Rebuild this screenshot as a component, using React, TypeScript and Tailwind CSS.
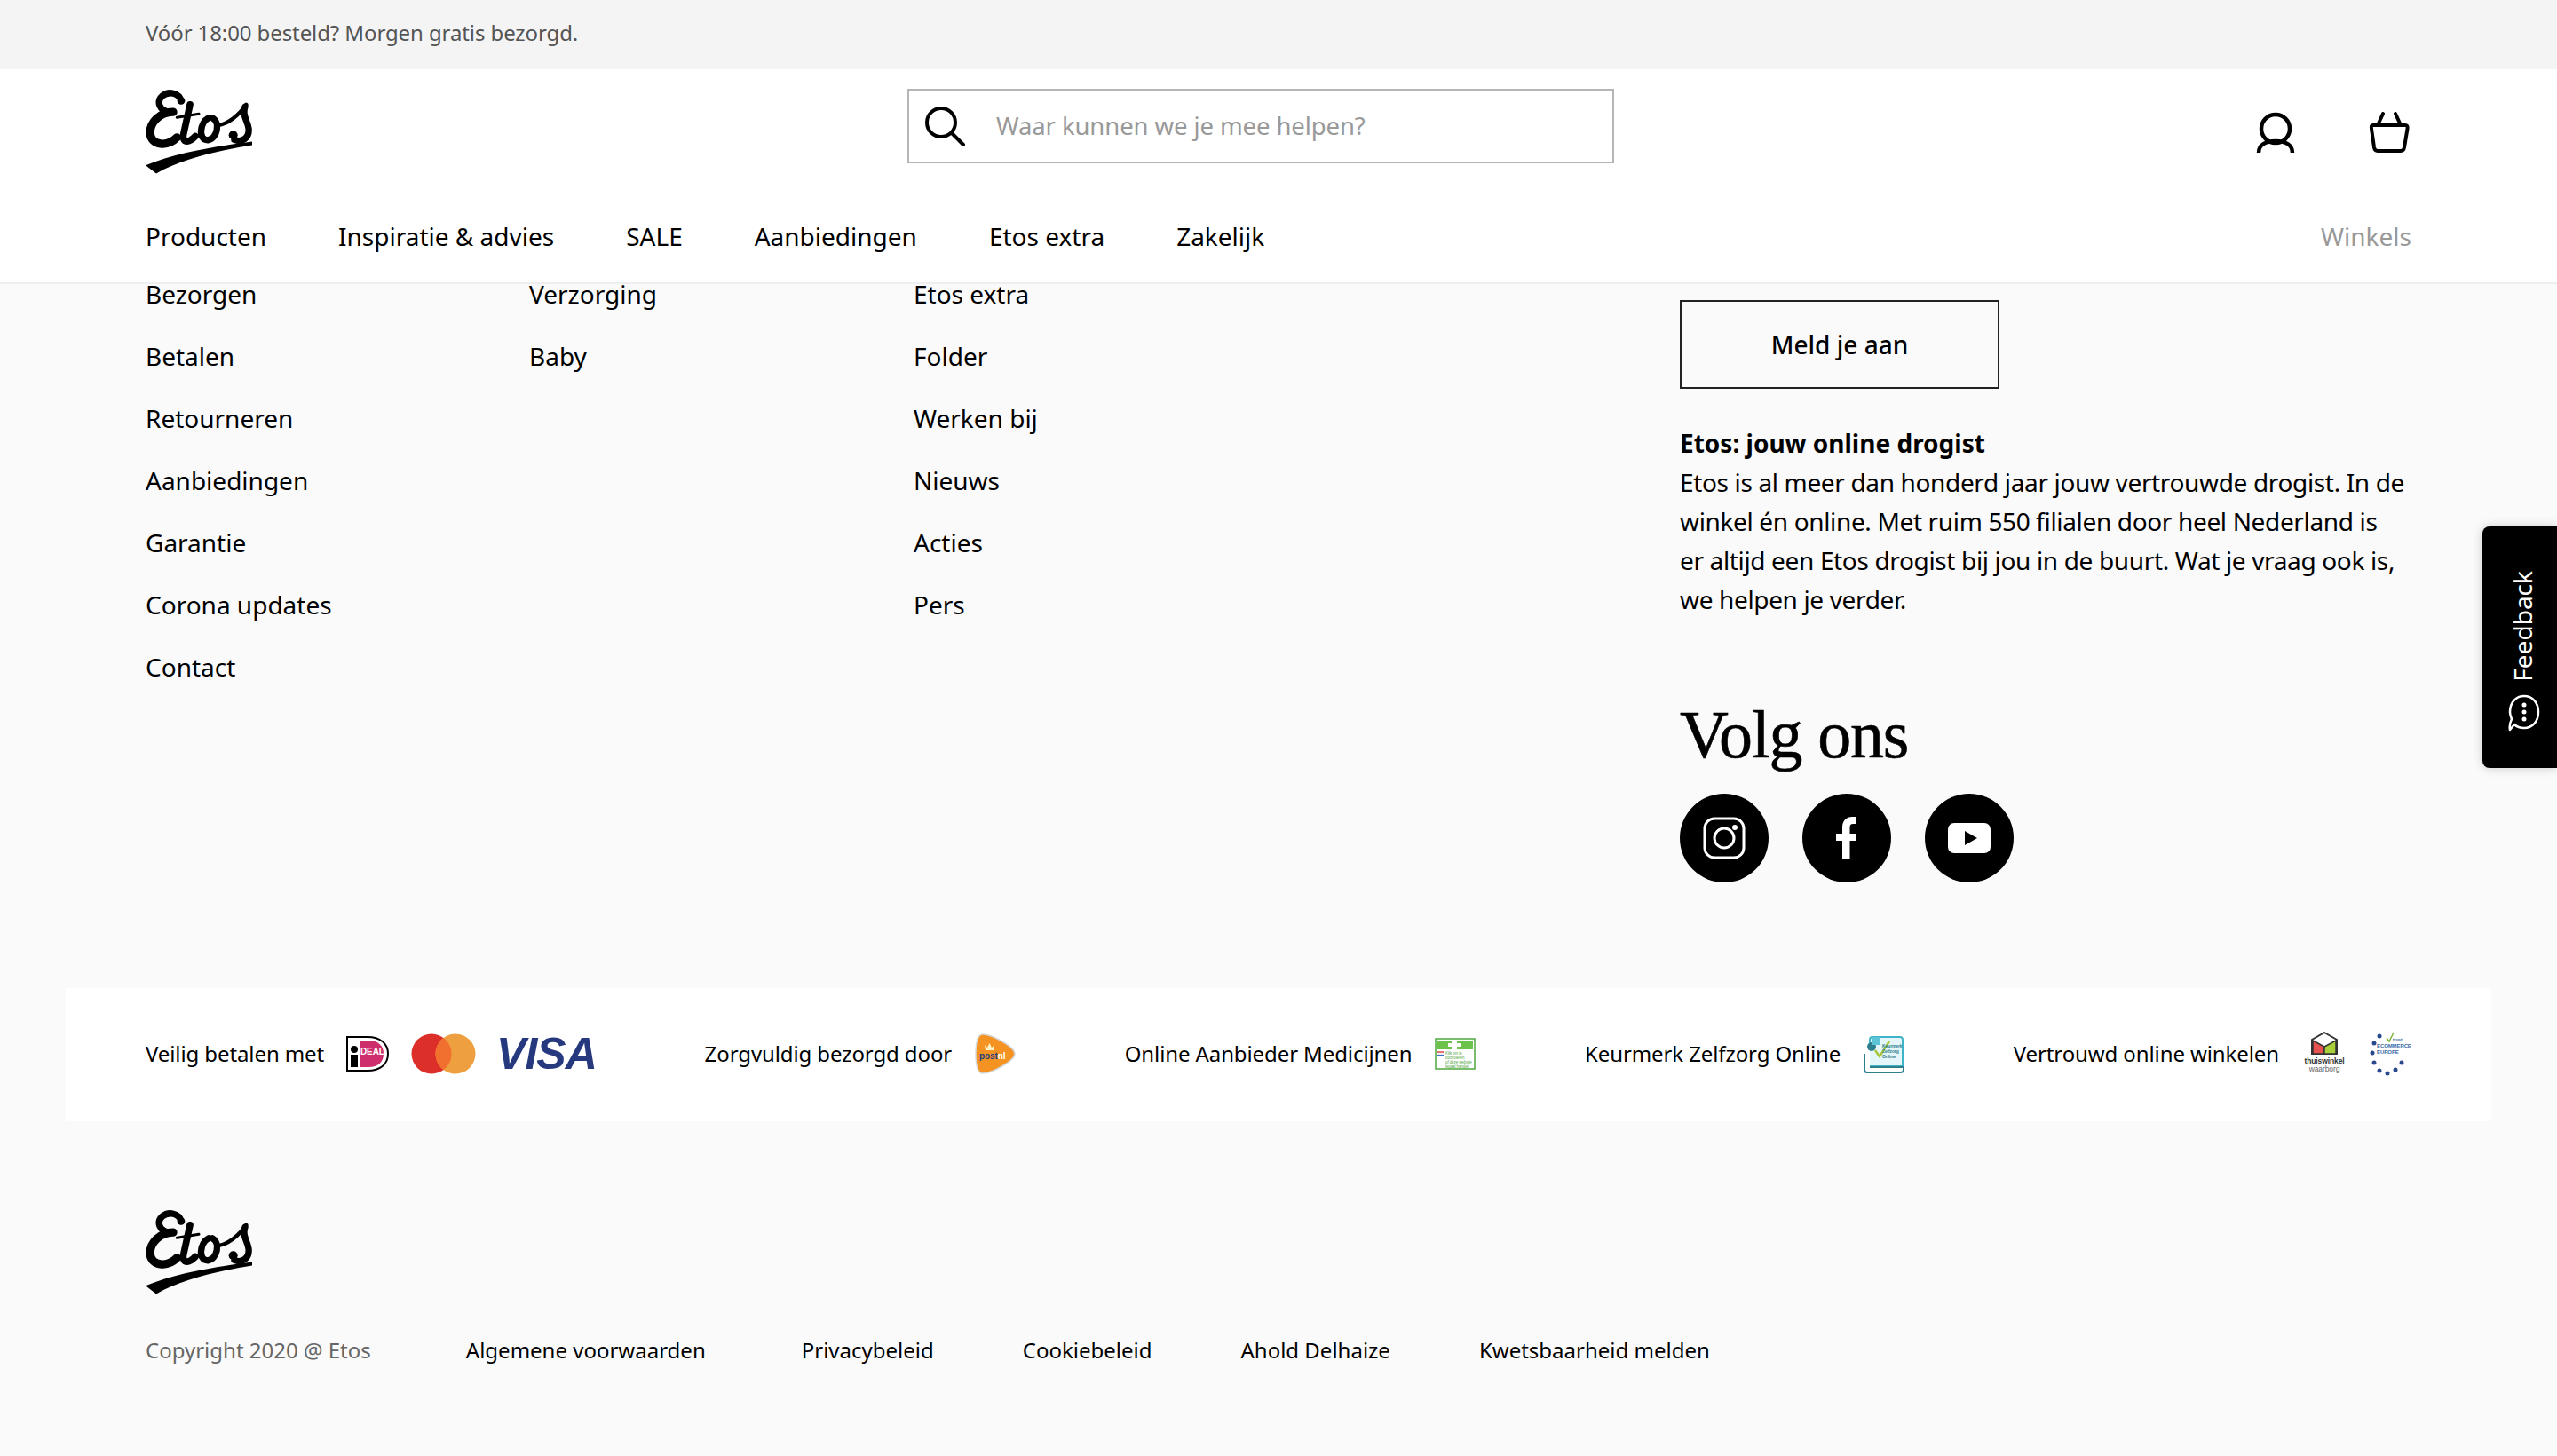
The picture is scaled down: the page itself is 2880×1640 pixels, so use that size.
const font = "[font-family:'Noto_Sans',sans-serif]";

const EtosLogo = () => (
  <svg viewBox="72 72 360 290" className="w-[120px] h-[97px] block" fill="none" stroke="black" strokeLinecap="round">
    <path d="M192 112C185 85 150 78 128 96C108 114 118 145 152 150" strokeWidth="22" />
    <circle cx="192" cy="112" r="13" fill="black" stroke="none" />
    <path d="M165 150C122 150 84 185 88 225C92 262 145 270 178 236" strokeWidth="28" />
    <path d="M222 125L200 225C195 252 215 258 240 232" strokeWidth="23" />
    <path d="M178 168L252 156" strokeWidth="9" />
    <path d="M285 170C255 185 248 245 282 245C315 240 325 185 298 170" strokeWidth="22" />
    <path d="M312 196C350 192 388 160 412 125" strokeWidth="13" />
    <path d="M408 132C398 162 416 178 420 205C424 240 395 254 372 244" strokeWidth="22" />
    <circle cx="368" cy="228" r="15" fill="black" stroke="none" />
    <path d="M72 330C180 285 320 265 432 250L432 262C320 280 190 310 108 358Z" fill="black" stroke="none" />
  </svg>
);

const SearchIcon = () => (
  <svg width="46" height="46" viewBox="0 0 46 46" fill="none" stroke="black" strokeWidth="4" strokeLinecap="round">
    <circle cx="19" cy="19" r="16" />
    <path d="M31 31L44 44" />
  </svg>
);

const UserIcon = () => (
  <svg width="44" height="46" viewBox="0 0 44 46" fill="none" stroke="black" strokeWidth="4.5">
    <circle cx="22" cy="19" r="16" />
    <path d="M3 46C3 37 11 33 22 33C33 33 41 37 41 46" />
  </svg>
);

const BasketIcon = () => (
  <svg width="46" height="46" viewBox="0 0 46 46" fill="none" stroke="black" strokeWidth="4" strokeLinecap="round" strokeLinejoin="round">
    <path d="M10 15L16 2M36 15L30 2" />
    <path d="M5 15H41C43 15 44 16 43.500 19L40 40C39.500 43 38 44 36 44H10C8 44 6.500 43 6 40L3 19C2.500 16 3 15 5 15Z" />
  </svg>
);

const IdealIcon = () => (
  <svg width="48" height="40" viewBox="0 0 48 40">
    <path d="M1 1H24C38 1 47 8 47 20C47 32 38 39 24 39H1Z" fill="white" stroke="black" strokeWidth="2" />
    <path d="M16 5H25C36 5 42 11 42 20C42 29 36 35 25 35H16Z" fill="#cf2e6d" />
    <circle cx="9" cy="15" r="4" fill="black" />
    <rect x="5" y="21" width="8" height="14" fill="black" />
    <text x="16" y="21" fontSize="10" fontWeight="700" fill="white" fontFamily="Liberation Sans">DEAL</text>
  </svg>
);

const MasterIcon = () => (
  <svg width="73" height="46" viewBox="0 0 73 46">
    <circle cx="23" cy="23" r="22.500" fill="#dc2f2a" />
    <circle cx="50" cy="23" r="22.500" fill="#eea040" />
    <path d="M36.500 5C42 9 45.500 15.500 45.500 23C45.500 30.500 42 37 36.500 41C31 37 27.500 30.500 27.500 23C27.500 15.500 31 9 36.500 5Z" fill="#f2702f" />
  </svg>
);

const VisaText = () => (
  <span className="w-[112px] -ml-[2px] text-center text-[50px] leading-[46px] font-bold italic tracking-[-1px] text-[#26397f] [font-family:'Liberation_Sans',sans-serif]">
    VISA
  </span>
);

const PostNlIcon = () => (
  <svg width="46" height="46" viewBox="0 0 46 46">
    <path d="M9 1C19 1 45 15 45 23C45 31 19 45 9 45C3 45 1 35 1 23C1 11 3 1 9 1Z" fill="#f49321" stroke="#d8d8d8" strokeWidth="1.500" />
    <path d="M11 13L14 16L16.500 11L19 16L22 13L21 19H12Z" fill="#fff2c8" />
    <text x="5" y="29" fontSize="10" fontWeight="700" fill="#27407f" fontFamily="Liberation Sans">post<tspan fill="white">nl</tspan></text>
  </svg>
);

const MedicineIcon = () => (
  <svg width="46" height="36" viewBox="0 0 46 36">
    <rect x="1" y="1" width="44" height="34" fill="white" stroke="#4fa83d" strokeWidth="1.500" />
    <rect x="3" y="3" width="40" height="10" fill="#6cc24a" />
    <path d="M19 3H25V6H29V10H25V14H19V10H15V6H19Z" fill="white" />
    <rect x="3" y="15" width="7" height="2" fill="#e57373" />
    <rect x="3" y="17" width="7" height="2" fill="#eeeeee" />
    <rect x="3" y="19" width="7" height="2" fill="#3f6fc4" />
    <text x="12" y="19" fontSize="4.500" fill="#55a845" fontFamily="Liberation Sans">Klik om te</text>
    <text x="12" y="24" fontSize="4.500" fill="#55a845" fontFamily="Liberation Sans">controleren</text>
    <text x="12" y="29" fontSize="4.500" fill="#55a845" fontFamily="Liberation Sans">of deze website</text>
    <text x="12" y="34" fontSize="4.500" fill="#55a845" fontFamily="Liberation Sans">legaal handelt</text>
  </svg>
);

const ZelfzorgIcon = () => (
  <svg width="47" height="48" viewBox="0 0 47 48">
    <path d="M8 14V8C8 6 9 5 11 5H42C44 5 45 6 45 8V38H8" fill="#e4f6f9" stroke="#3fb4c8" strokeWidth="2" />
    <path d="M2 24V42C2 44 3 45 5 45H42C44 45 46 44 46 42V39H8" fill="white" stroke="#2d7f8c" strokeWidth="2" />
    <circle cx="10" cy="16" r="5" fill="#2d7f8c" />
    <rect x="11" y="5" width="9" height="9" fill="#5cc4d6" />
    <path d="M14 20L19 27L30 10" fill="none" stroke="#a9c63a" strokeWidth="2.500" />
    <text x="22" y="17" fontSize="5" fontWeight="700" fill="#2d7f8c" fontFamily="Liberation Sans">Keurmerk</text>
    <text x="22" y="23" fontSize="5" fontWeight="700" fill="#2d7f8c" fontFamily="Liberation Sans">Zelfzorg</text>
    <text x="22" y="29" fontSize="5" fontWeight="700" fill="#2d7f8c" fontFamily="Liberation Sans">Online</text>
  </svg>
);

const ThuiswinkelIcon = () => (
  <svg width="50" height="50" viewBox="0 0 50 50">
    <path d="M25 1L39 9V25H11V9Z" fill="white" stroke="#333" strokeWidth="2" />
    <path d="M12 10L25 17V25H12Z" fill="#e8534f" stroke="#333" strokeWidth="1.500" />
    <path d="M38 10L25 17V25H38Z" fill="#a8cf3a" stroke="#333" strokeWidth="1.500" />
    <text x="25" y="36" textAnchor="middle" fontSize="8.500" fontWeight="700" fill="#333" fontFamily="Liberation Sans">thuiswinkel</text>
    <text x="25" y="45" textAnchor="middle" fontSize="8.500" fill="#666" fontFamily="Liberation Sans">waarborg</text>
  </svg>
);

const stars = [
  [9, 3], [3, 11], [1, 22], [3, 33], [9, 42], [18, 45], [27, 41], [34, 33],
];

const EcommerceIcon = () => (
  <svg width="47" height="50" viewBox="0 0 47 50">
    <path d="M19 7L22 11L27 1" fill="none" stroke="#7fb539" strokeWidth="1.500" />
    <text x="26" y="11" fontSize="5" fontWeight="700" fill="#3b6aa8" fontFamily="Liberation Sans">trust</text>
    <text x="8" y="18" fontSize="6" fontWeight="700" fill="#3b6aa8" fontFamily="Liberation Sans">ECOMMERCE</text>
    <text x="8" y="25" fontSize="6" fontWeight="700" fill="#3b6aa8" fontFamily="Liberation Sans">EUROPE</text>
    {stars.map(([x, y]) => (
      <circle key={`${x}-${y}`} cx={x + 2} cy={y + 2} r="2.500" fill="#27498c" />
    ))}
  </svg>
);

const InstagramIcon = () => (
  <svg width="48" height="48" viewBox="0 0 48 48" fill="none" stroke="white" strokeWidth="3">
    <rect x="2" y="2" width="44" height="44" rx="11" />
    <circle cx="24" cy="24" r="11" />
    <circle cx="36" cy="12" r="3" fill="white" stroke="none" />
  </svg>
);

const FacebookIcon = () => (
  <svg width="24" height="48" viewBox="0 0 24 48">
    <path d="M7 48V27H0V19H7V12C7 4 12 0 18 0H23V8H19C16.500 8 15.500 9.500 15.500 12V19H23L22 27H15.500V48Z" fill="white" />
  </svg>
);

const YoutubeIcon = () => (
  <svg width="48" height="34" viewBox="0 0 48 34">
    <rect width="48" height="34" rx="7" fill="white" />
    <path d="M19 9L33 17L19 25Z" fill="black" />
  </svg>
);

const FeedbackIcon = () => (
  <svg width="42" height="36" viewBox="0 0 42 36" fill="none" stroke="white" strokeWidth="2.500" className="rotate-90 ml-[4px]">
    <path d="M20 2C31 2 38 9 38 18C38 25 34 29 34 29L40 34C35 35 30 33 28 32C25 33 23 34 20 34C9 34 2 27 2 18C2 9 9 2 20 2Z" strokeLinejoin="round" />
    <circle cx="12" cy="18" r="2.500" fill="white" stroke="none" />
    <circle cx="20" cy="18" r="2.500" fill="white" stroke="none" />
    <circle cx="28" cy="18" r="2.500" fill="white" stroke="none" />
  </svg>
);

const navItems = ['Producten', 'Inspiratie & advies', 'SALE', 'Aanbiedingen', 'Etos extra', 'Zakelijk'];
const col1 = ['Bezorgen', 'Betalen', 'Retourneren', 'Aanbiedingen', 'Garantie', 'Corona updates', 'Contact'];
const col2 = ['Verzorging', 'Baby'];
const col3 = ['Etos extra', 'Folder', 'Werken bij', 'Nieuws', 'Acties', 'Pers'];

const LinkColumn = ({ items, width }: { items: string[]; width: string }) => (
  <ul className={width}>
    {items.map((item) => (
      <li key={item} className="h-[70px] leading-[70px] text-[28px] text-black">{item}</li>
    ))}
  </ul>
);

export default function App() {
  return (
    <div className={`relative w-[2880px] h-[1640px] overflow-hidden bg-[#fafafa] ${font}`}>
      <header className="relative z-10 bg-white border-b-2 border-[#eeeeee]">
        <div className="h-[78px] bg-[#f4f4f4] pl-[164px] pb-[4px] flex items-center text-[24px] tracking-[-0.1px] text-[#555555]">
          Vóór 18:00 besteld? Morgen gratis bezorgd.
        </div>
        <div className="h-[120px] px-[164px] pt-[22px] flex items-start">
          <EtosLogo />
          <div className="ml-[738px] w-[796px] h-[84px] border-2 border-[#b5b5b5] flex items-center gap-[35px] pl-[17px] text-[27.5px] tracking-[-0.1px] text-[#999999]">
            <SearchIcon />
            <span>Waar kunnen we je mee helpen?</span>
          </div>
          <div className="ml-auto w-[175px] pt-[26px] pr-[2px] flex justify-between">
            <UserIcon />
            <BasketIcon />
          </div>
        </div>
        <nav className="h-[120px] px-[164px] pt-[48px] flex items-start justify-between text-[28px] leading-[40px]">
          <div className="flex gap-[81px] text-black">
            {navItems.map((item) => <span key={item}>{item}</span>)}
          </div>
          <span className="text-[#999999]">Winkels</span>
        </nav>
      </header>

      <main className="-mt-[24px] pl-[164px] flex items-start">
        <div className="w-[1728px] flex">
          <LinkColumn items={col1} width="w-[432px]" />
          <LinkColumn items={col2} width="w-[433px]" />
          <LinkColumn items={col3} width="w-[400px]" />
        </div>
        <div className="w-[824px] pt-[42px]">
          <button className="w-[360px] h-[100px] border-2 border-[#222222] text-[28px] font-medium text-black">
            Meld je aan
          </button>
          <h3 className="mt-[39px] text-[28px] leading-[44px] font-bold text-black">Etos: jouw online drogist</h3>
          <p className="w-[818px] text-[28px] leading-[44px] tracking-[-0.35px] text-black">
            Etos is al meer dan honderd jaar jouw vertrouwde drogist. In de winkel én online. Met ruim 550 filialen door heel Nederland is er altijd een Etos drogist bij jou in de buurt. Wat je vraag ook is, we helpen je verder.
          </p>
          <h2 className="mt-[86px] text-[76px] leading-[88px] tracking-[-1.2px] text-black [-webkit-text-stroke:0.6px_black] [font-family:'Liberation_Serif',serif]">Volg ons</h2>
          <div className="mt-[23px] flex gap-[38px]">
            <div className="w-[100px] h-[100px] rounded-full bg-black flex items-center justify-center"><InstagramIcon /></div>
            <div className="w-[100px] h-[100px] rounded-full bg-black flex items-center justify-center"><FacebookIcon /></div>
            <div className="w-[100px] h-[100px] rounded-full bg-black flex items-center justify-center"><YoutubeIcon /></div>
          </div>
        </div>
      </main>

      <section className="absolute left-[74px] top-[1113px] w-[2732px] h-[150px] bg-white px-[90px] pb-[2px] flex items-center justify-between text-[24px] tracking-[-0.1px] text-black">
        <div className="flex items-center gap-[25px]"><span>Veilig betalen met</span><IdealIcon /><MasterIcon /><VisaText /></div>
        <div className="flex items-center gap-[26px]"><span>Zorgvuldig bezorgd door</span><PostNlIcon /></div>
        <div className="flex items-center gap-[26px]"><span>Online Aanbieder Medicijnen</span><MedicineIcon /></div>
        <div className="flex items-center gap-[25px]"><span>Keurmerk Zelfzorg Online</span><ZelfzorgIcon /></div>
        <div className="flex items-center gap-[26px]"><span>Vertrouwd online winkelen</span><ThuiswinkelIcon /><EcommerceIcon /></div>
      </section>

      <footer className="absolute left-[164px] top-[1362px]">
        <EtosLogo />
        <div className="mt-[42px] flex items-center text-[24px] leading-[40px] text-black">
          <span className="text-[#666666] mr-[107px]">Copyright 2020 @ Etos</span>
          <span className="mr-[108px]">Algemene voorwaarden</span>
          <span className="mr-[100px]">Privacybeleid</span>
          <span className="mr-[100px]">Cookiebeleid</span>
          <span className="mr-[100px]">Ahold Delhaize</span>
          <span>Kwetsbaarheid melden</span>
        </div>
      </footer>

      <button className="absolute right-0 top-[593px] w-[84px] h-[272px] bg-black rounded-l-[8px] shadow-[0_0_12px_rgba(0,0,0,0.2)] pl-[6px] pt-[6px] flex flex-col items-center justify-center gap-[18px] text-white text-[28px]">
        <span className="[writing-mode:vertical-rl] rotate-180">Feedback</span>
        <FeedbackIcon />
      </button>
    </div>
  );
}
